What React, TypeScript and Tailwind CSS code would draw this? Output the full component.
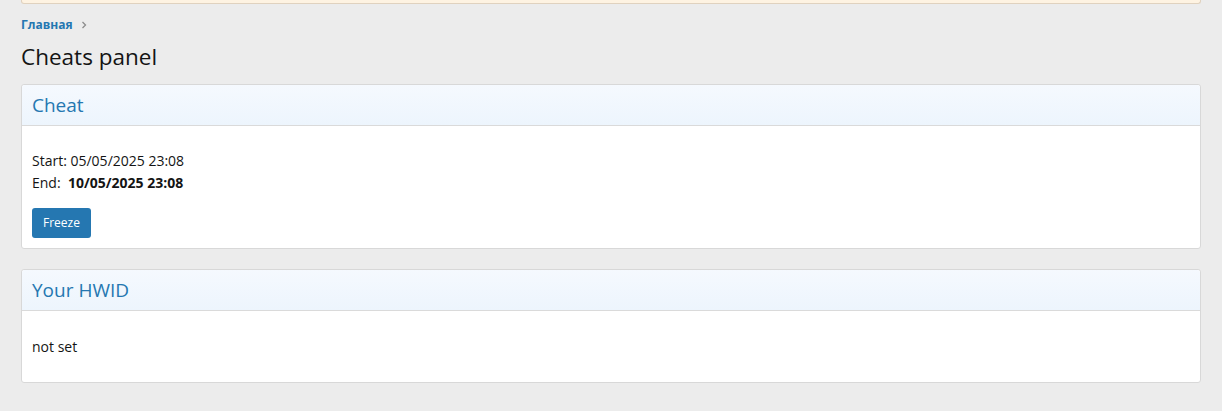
export default function App() {
  return (
    <div className="min-h-screen bg-[#ececec] px-[21px] pb-6 text-[#141414]" style={{ fontFamily: '"Open Sans", "Noto Sans", sans-serif' }}>
      <div className="h-[5px] -mt-px rounded-b-[3px] border border-t-0 border-[#e0d2bf] bg-[#fef3e2]" />

      <div className="mt-[13px] flex items-center gap-[7px] text-[12px] leading-[16px]">
        <a href="#" className="font-bold text-[#2577b1]">Главная</a>
        <svg width="8" height="8" viewBox="0 0 8 8" className="text-[#8c8c8c]">
          <path d="M2.5 1 L5.5 4 L2.5 7" fill="none" stroke="currentColor" strokeWidth="1.3" />
        </svg>
      </div>

      <h1 className="mt-[9px] text-[22.5px] leading-[30px] font-normal">Cheats panel</h1>

      <div className="mt-[12px] rounded-[3px] border border-[#d8d8d8] bg-white">
        <div className="rounded-t-[3px] border-b border-[#dadada] bg-gradient-to-b from-[#f5f9fe] to-[#edf5fd] px-[10px] pt-[8px] pb-[7px]">
          <h2 className="text-[19px] leading-[25px] font-normal text-[#2577b1]">Cheat</h2>
        </div>
        <div className="px-[10px] pt-[24px] pb-[10px] text-[14px] leading-[22px]">
          <div>Start: 05/05/2025 23:08</div>
          <div>
            End:&nbsp; <b className="font-bold">10/05/2025 23:08</b>
          </div>
          <button className="mt-[14px] h-[30px] rounded-[3px] bg-[#2577b1] px-[11px] text-[12px] text-white">
            Freeze
          </button>
        </div>
      </div>

      <div className="mt-[20px] rounded-[3px] border border-[#d8d8d8] bg-white">
        <div className="rounded-t-[3px] border-b border-[#dadada] bg-gradient-to-b from-[#f5f9fe] to-[#edf5fd] px-[10px] pt-[8px] pb-[7px]">
          <h2 className="text-[19px] leading-[25px] font-normal text-[#2577b1]">Your HWID</h2>
        </div>
        <div className="px-[10px] pt-[25px] pb-[24px] text-[14px] leading-[22px]">not set</div>
      </div>
    </div>
  )
}
